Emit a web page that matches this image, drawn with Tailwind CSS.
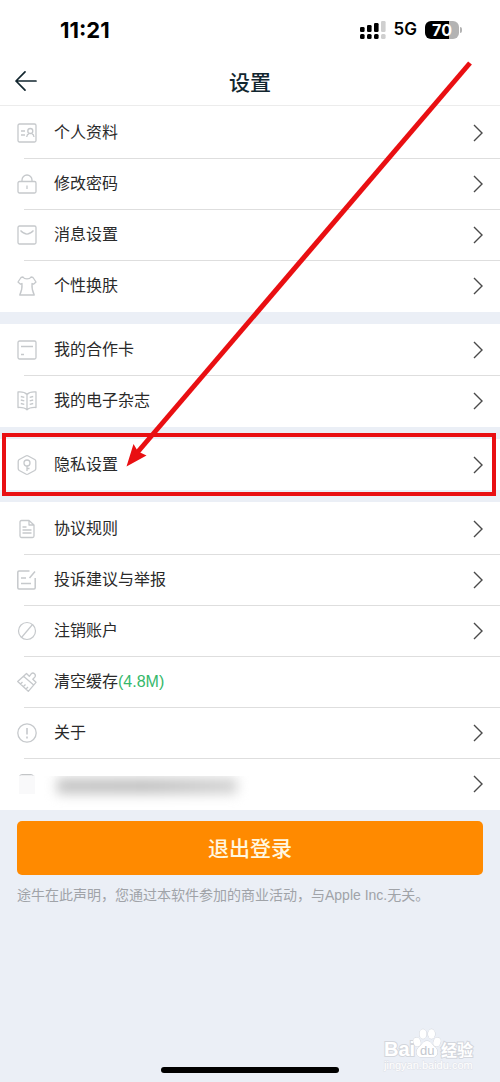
<!DOCTYPE html>
<html lang="zh-CN">
<head>
<meta charset="utf-8">
<meta name="viewport" content="width=device-width, initial-scale=1">
<title>设置</title>
<script src="https://cdn.jsdelivr.net/npm/@tailwindcss/browser@4"></script>
</head>
<body class="relative flex min-h-screen flex-col overflow-x-hidden bg-[#ebeff6] font-['Liberation_Sans','Noto_Sans_CJK_SC',sans-serif] text-base text-[#2a2a2a]">

<svg class="hidden" aria-hidden="true">
  <symbol id="chevron" viewBox="0 0 10 18"><path d="M1 1l8 8-8 8" fill="none" stroke="#4a4a4a" stroke-width="1.4"/></symbol>
</svg>

<header class="border-b border-[#ececec] bg-white">
  <div class="flex h-[60px] items-center justify-between pr-[38px] pl-[60px] font-['Inter',sans-serif] text-black">
    <span class="text-[22px] font-bold">11:21</span>
    <div class="flex items-center gap-2">
      <svg class="h-[18px] w-[26px]" viewBox="0 0 26 18" aria-hidden="true">
        <g fill="#000"><rect x="0" y="6" width="4.6" height="5" rx="1.3"/><rect x="7" y="4" width="4.6" height="7" rx="1.3"/><rect x="14" y="2" width="4.6" height="9" rx="1.3"/><rect x="0" y="13" width="4.6" height="5" rx="1.5"/><rect x="7" y="13" width="4.6" height="5" rx="1.5"/><rect x="14" y="13" width="4.6" height="5" rx="1.5"/></g>
        <g fill="#cfcfcf"><rect x="21" y="0" width="4.6" height="11" rx="1.3"/><rect x="21" y="13" width="4.6" height="5" rx="1.5"/></g>
      </svg>
      <span class="text-[17px] font-semibold">5G</span>
      <div class="flex items-center gap-px">
        <div class="flex h-[18px] w-[34px] items-center justify-center rounded-md bg-linear-to-r from-black from-70% to-[#b3b3b3] to-70% text-base leading-none font-bold text-white">70</div>
        <div class="h-1.5 w-0.5 rounded-r bg-[#b3b3b3]"></div>
      </div>
    </div>
  </div>
  <nav class="grid h-[45px] grid-cols-[1fr_auto_1fr] items-center px-[15px] pb-1 text-[#12262f]">
    <button type="button" aria-label="返回" class="w-[22px]">
      <svg class="block h-5 w-[22px]" viewBox="0 0 22 20" fill="none" stroke="currentColor" stroke-width="1.7" stroke-linecap="round" stroke-linejoin="round"><path d="M10 .9L1 10l9 9.1M1 10h20"/></svg>
    </button>
    <h1 class="font-['Noto_Sans_CJK_SC',sans-serif] text-[21px] leading-7 font-medium">设置</h1>
  </nav>
</header>

<main class="flex flex-col gap-3">
  <ul class="bg-white py-px">
    <li><a href="#profile" class="flex h-[51px] items-stretch pl-[17px]">
      <svg class="h-5 w-5 self-center" viewBox="0 0 20 20" fill="none" stroke="#c6c9cc" stroke-width="1.3"><rect x="1" y="1" width="18" height="18" rx="1.5"/><path d="M4 8h4M4 12h4M9.7 14c.2-2 .8-3 2.3-3.4M17 14c-.2-2-.8-3-2.3-3.4"/><circle cx="13.300" cy="8" r="2.500"/></svg>
      <span class="ml-[17px] flex flex-1 items-center">个人资料</span><svg class="mr-[17px] h-[18px] w-2.5 self-center"><use href="#chevron"/></svg></a></li>
    <li><a href="#password" class="relative flex h-[51px] items-stretch pl-[17px] before:absolute before:top-0 before:right-0 before:left-6 before:h-px before:bg-[#dedede]">
      <svg class="h-5 w-5 self-center" viewBox="0 0 20 20" fill="none" stroke="#c6c9cc" stroke-width="1.3"><rect x="1" y="7.5" width="18" height="11.5" rx="1.5"/><path d="M5 7.5V6a5 5 0 0110 0v1.500M10 11.500v3.500"/></svg>
      <span class="ml-[17px] flex flex-1 items-center">修改密码</span><svg class="mr-[17px] h-[18px] w-2.5 self-center"><use href="#chevron"/></svg></a></li>
    <li><a href="#messages" class="relative flex h-[51px] items-stretch pl-[17px] before:absolute before:top-0 before:right-0 before:left-6 before:h-px before:bg-[#dedede]">
      <svg class="h-5 w-5 self-center" viewBox="0 0 20 20" fill="none" stroke="#c6c9cc" stroke-width="1.3"><rect x="1" y="1" width="18" height="18" rx="1.5"/><path d="M3.500 5.500c4.500 4.700 8.500 4.700 13 0"/></svg>
      <span class="ml-[17px] flex flex-1 items-center">消息设置</span><svg class="mr-[17px] h-[18px] w-2.5 self-center"><use href="#chevron"/></svg></a></li>
    <li><a href="#skin" class="relative flex h-[51px] items-stretch pl-[17px] before:absolute before:top-0 before:right-0 before:left-6 before:h-px before:bg-[#dedede]">
      <svg class="h-5 w-5 self-center" viewBox="0 0 20 20" fill="none" stroke="#c6c9cc" stroke-width="1.3" stroke-linejoin="round"><path d="M6 1c1.200 2.600 6.800 2.600 8 0l2 .5L19 6l-2.500 2.200-1.500-.7c-.3 4 .2 7.500 2.300 11.500H2.700C4.800 15 5.300 11.500 5 7.500l-1.500.7L1 6l3-4.500z"/></svg>
      <span class="ml-[17px] flex flex-1 items-center">个性换肤</span><svg class="mr-[17px] h-[18px] w-2.5 self-center"><use href="#chevron"/></svg></a></li>
  </ul>

  <ul class="bg-white pb-px">
    <li><a href="#card" class="flex h-[51px] items-stretch pl-[17px]">
      <svg class="h-5 w-5 self-center" viewBox="0 0 20 20" fill="none" stroke="#c6c9cc" stroke-width="1.3"><rect x="1" y="1" width="18" height="18" rx="1.5"/><path d="M4 6.500h12M4 14.500h3"/></svg>
      <span class="ml-[17px] flex flex-1 items-center">我的合作卡</span><svg class="mr-[17px] h-[18px] w-2.5 self-center"><use href="#chevron"/></svg></a></li>
    <li><a href="#magazine" class="relative flex h-[51px] items-stretch pl-[17px] before:absolute before:top-0 before:right-0 before:left-6 before:h-px before:bg-[#dedede]">
      <svg class="h-5 w-5 self-center" viewBox="0 0 20 20" fill="none" stroke="#c6c9cc" stroke-width="1.3" stroke-linejoin="round"><path d="M10 3.500C8 1.300 4.500.7 1 1v15.500c3.500-.2 7 .3 9 2.300 2-2 5.500-2.500 9-2.300V1c-3.500-.3-7 .3-9 2.500zM10 3.500v15M3.800 5.500l3.500.9M3.800 9l3.500.9M3.800 12.500l3.500.9M16.200 5.500l-3.500.9M16.200 9l-3.500.9M16.200 12.500l-3.500.9"/></svg>
      <span class="ml-[17px] flex flex-1 items-center">我的电子杂志</span><svg class="mr-[17px] h-[18px] w-2.5 self-center"><use href="#chevron"/></svg></a></li>
  </ul>

  <ul class="relative bg-white">
    <li><a href="#privacy" class="flex h-[51px] items-stretch pl-[17px]">
      <svg class="h-5 w-5 self-center" viewBox="0 0 20 20" fill="none" stroke="#c6c9cc" stroke-width="1.3" stroke-linejoin="round"><path d="M8.800 1q1.200-.6 2.400 0l6.500 3.500q1.100.7 1.100 2v7q0 1.300-1.100 2L11.200 19q-1.200.6-2.400 0l-6.500-3.500q-1.100-.7-1.100-2v-7q0-1.300 1.100-2z"/><circle cx="10" cy="8" r="3"/><path d="M10 11v5M10 13.500h2.500"/></svg>
      <span class="ml-[17px] flex flex-1 items-center">隐私设置</span><svg class="mr-[17px] h-[18px] w-2.5 self-center"><use href="#chevron"/></svg></a></li>
    <li aria-hidden="true" class="pointer-events-none absolute -inset-y-1.5 right-1 left-0.5 border-4 border-[#e90f12]"></li>
  </ul>

  <ul class="bg-white py-px">
    <li><a href="#terms" class="flex h-[51px] items-stretch pl-[17px]">
      <svg class="h-5 w-5 self-center" viewBox="0 0 20 20" fill="none" stroke="#c6c9cc" stroke-width="1.3" stroke-linejoin="round"><path d="M12 1.500H4.500Q3 1.500 3 3v14q0 1.500 1.500 1.500h11q1.500 0 1.500-1.500V6zV6h5M5.500 8h4M5.500 11h9M5.500 14h9"/></svg>
      <span class="ml-[17px] flex flex-1 items-center">协议规则</span><svg class="mr-[17px] h-[18px] w-2.5 self-center"><use href="#chevron"/></svg></a></li>
    <li><a href="#feedback" class="relative flex h-[51px] items-stretch pl-[17px] before:absolute before:top-0 before:right-0 before:left-6 before:h-px before:bg-[#dedede]">
      <svg class="h-5 w-5 self-center" viewBox="0 0 20 20" fill="none" stroke="#c6c9cc" stroke-width="1.5"><path d="M12.500 1H2Q.8 1 .8 2.200v15.600Q.8 19 2 19h15q1.200 0 1.200-1.200V8M18 1.500L12.500 8M4 8h5M4 13.500h10"/></svg>
      <span class="ml-[17px] flex flex-1 items-center">投诉建议与举报</span><svg class="mr-[17px] h-[18px] w-2.5 self-center"><use href="#chevron"/></svg></a></li>
    <li><a href="#close-account" class="relative flex h-[51px] items-stretch pl-[17px] before:absolute before:top-0 before:right-0 before:left-6 before:h-px before:bg-[#dedede]">
      <svg class="h-5 w-5 self-center" viewBox="0 0 20 20" fill="none" stroke="#c6c9cc" stroke-width="1.2"><circle cx="10" cy="10" r="8.500"/><path d="M15.500 3.500l-11 13"/></svg>
      <span class="ml-[17px] flex flex-1 items-center">注销账户</span><svg class="mr-[17px] h-[18px] w-2.5 self-center"><use href="#chevron"/></svg></a></li>
    <li><button type="button" class="relative flex h-[51px] w-full items-stretch pl-[17px] text-left before:absolute before:top-0 before:right-0 before:left-6 before:h-px before:bg-[#dedede]">
      <svg class="h-5 w-5 self-center" viewBox="0 0 20 20" fill="none" stroke="#c6c9cc" stroke-width="1.3" stroke-linejoin="round"><path d="M.7 9.500L9.500 1.500l2.800 2.800 1.900-2.500q1.700-1.500 3.300 0t.3 3.300l-2 2.200 3.200 3-7.700 9zM6.500 4.200l10.500 9M3.500 12l2-2M6.500 14.500l2-2M9 17l2-2"/></svg>
      <span class="ml-[17px] flex flex-1 items-center">清空缓存<span class="text-[#35b86b]">(4.8M)</span></span></button></li>
    <li><a href="#about" class="relative flex h-[51px] items-stretch pl-[17px] before:absolute before:top-0 before:right-0 before:left-6 before:h-px before:bg-[#dedede]">
      <svg class="h-5 w-5 self-center" viewBox="0 0 20 20" fill="none" stroke="#c6c9cc" stroke-width="1.3"><circle cx="10" cy="10" r="9.200"/><path d="M10 5v6.500M10 13.500v2" stroke-width="1.6"/></svg>
      <span class="ml-[17px] flex flex-1 items-center">关于</span><svg class="mr-[17px] h-[18px] w-2.5 self-center"><use href="#chevron"/></svg></a></li>
    <li><a href="#more" aria-label="更多" class="relative flex h-[51px] items-stretch pl-[17px] before:absolute before:top-0 before:right-0 before:left-6 before:h-px before:bg-[#dedede]">
      <svg class="h-5 w-5 self-center" viewBox="0 0 20 20" fill="none"><rect x="2" y="1" width="16" height="19" fill="#f9f9fa"/><path d="M3 1.500q.3-.8 1.500-.8h10q1.200 0 1.500.8" stroke="#b5b8bb"/></svg>
      <span class="ml-1 flex flex-1 items-center"><span class="mt-4 flex h-8 w-[220px] items-center overflow-hidden"><span class="mb-3 ml-4 h-4 w-[180px] bg-linear-to-r from-[#c6c6c6] via-[#c2c2c2] to-[#d4d4d4] blur-[6px]"></span></span></span><svg class="mr-[17px] h-[18px] w-2.5 self-center"><use href="#chevron"/></svg></a></li>
  </ul>
</main>

<section class="px-[17px] pt-[11px]">
  <button type="button" class="h-[54px] w-full rounded-[5px] bg-[#ff8a00] font-['Noto_Sans_CJK_SC',sans-serif] text-[21px] font-medium text-[#fff8e0]">退出登录</button>
  <p class="mt-2.5 text-sm leading-5 text-[#a0a3a8]">途牛在此声明，您通过本软件参加的商业活动，与Apple Inc.无关。</p>
</section>

<footer class="mt-auto flex flex-col pb-[9px]">
  <svg class="mr-[26px] h-[46px] w-[92px] self-end overflow-visible" viewBox="0 0 92 46" role="img" aria-label="Baidu 经验">
    <g fill="#fff" stroke="#d3d6dc" stroke-width="1" paint-order="stroke">
      <text x="2" y="35" font-size="20" font-weight="700" font-family="Liberation Sans" stroke-width="2">Bai</text>
      <ellipse cx="35" cy="21" rx="3.500" ry="4.500" transform="rotate(-20 35 21)"/>
      <ellipse cx="41" cy="13" rx="3.500" ry="4.800"/>
      <ellipse cx="49.500" cy="13" rx="3.500" ry="4.800"/>
      <ellipse cx="55" cy="21" rx="3.500" ry="4.500" transform="rotate(20 55 21)"/>
      <path d="M45 20c4 0 5 4 8 6s4 10-2 10H39c-6 0-5-8-2-10s4-6 8-6z"/>
      <text x="59" y="35" font-size="16" font-weight="700" font-family="Noto Sans CJK SC" stroke-width="2">经验</text>
      <text x="2" y="48" font-size="11" font-family="Liberation Sans" stroke="#dfe2e8">jingyan.baidu.com</text>
    </g>
    <text x="38" y="34" font-size="13" font-family="Liberation Sans" fill="#c3c7ce">du</text>
  </svg>
  <div class="h-1.5 w-[178px] self-center rounded-full bg-black"></div>
</footer>

<svg class="pointer-events-none absolute top-0 left-0 h-[480px] w-[500px]" viewBox="0 0 500 480" aria-hidden="true">
  <path d="M470 63L136 454" stroke="#e90f12" stroke-width="5"/>
  <path d="M126.500 466.500L133.500 444l4.500 7.500 8.500 4z" fill="#e90f12"/>
</svg>
</body>
</html>
